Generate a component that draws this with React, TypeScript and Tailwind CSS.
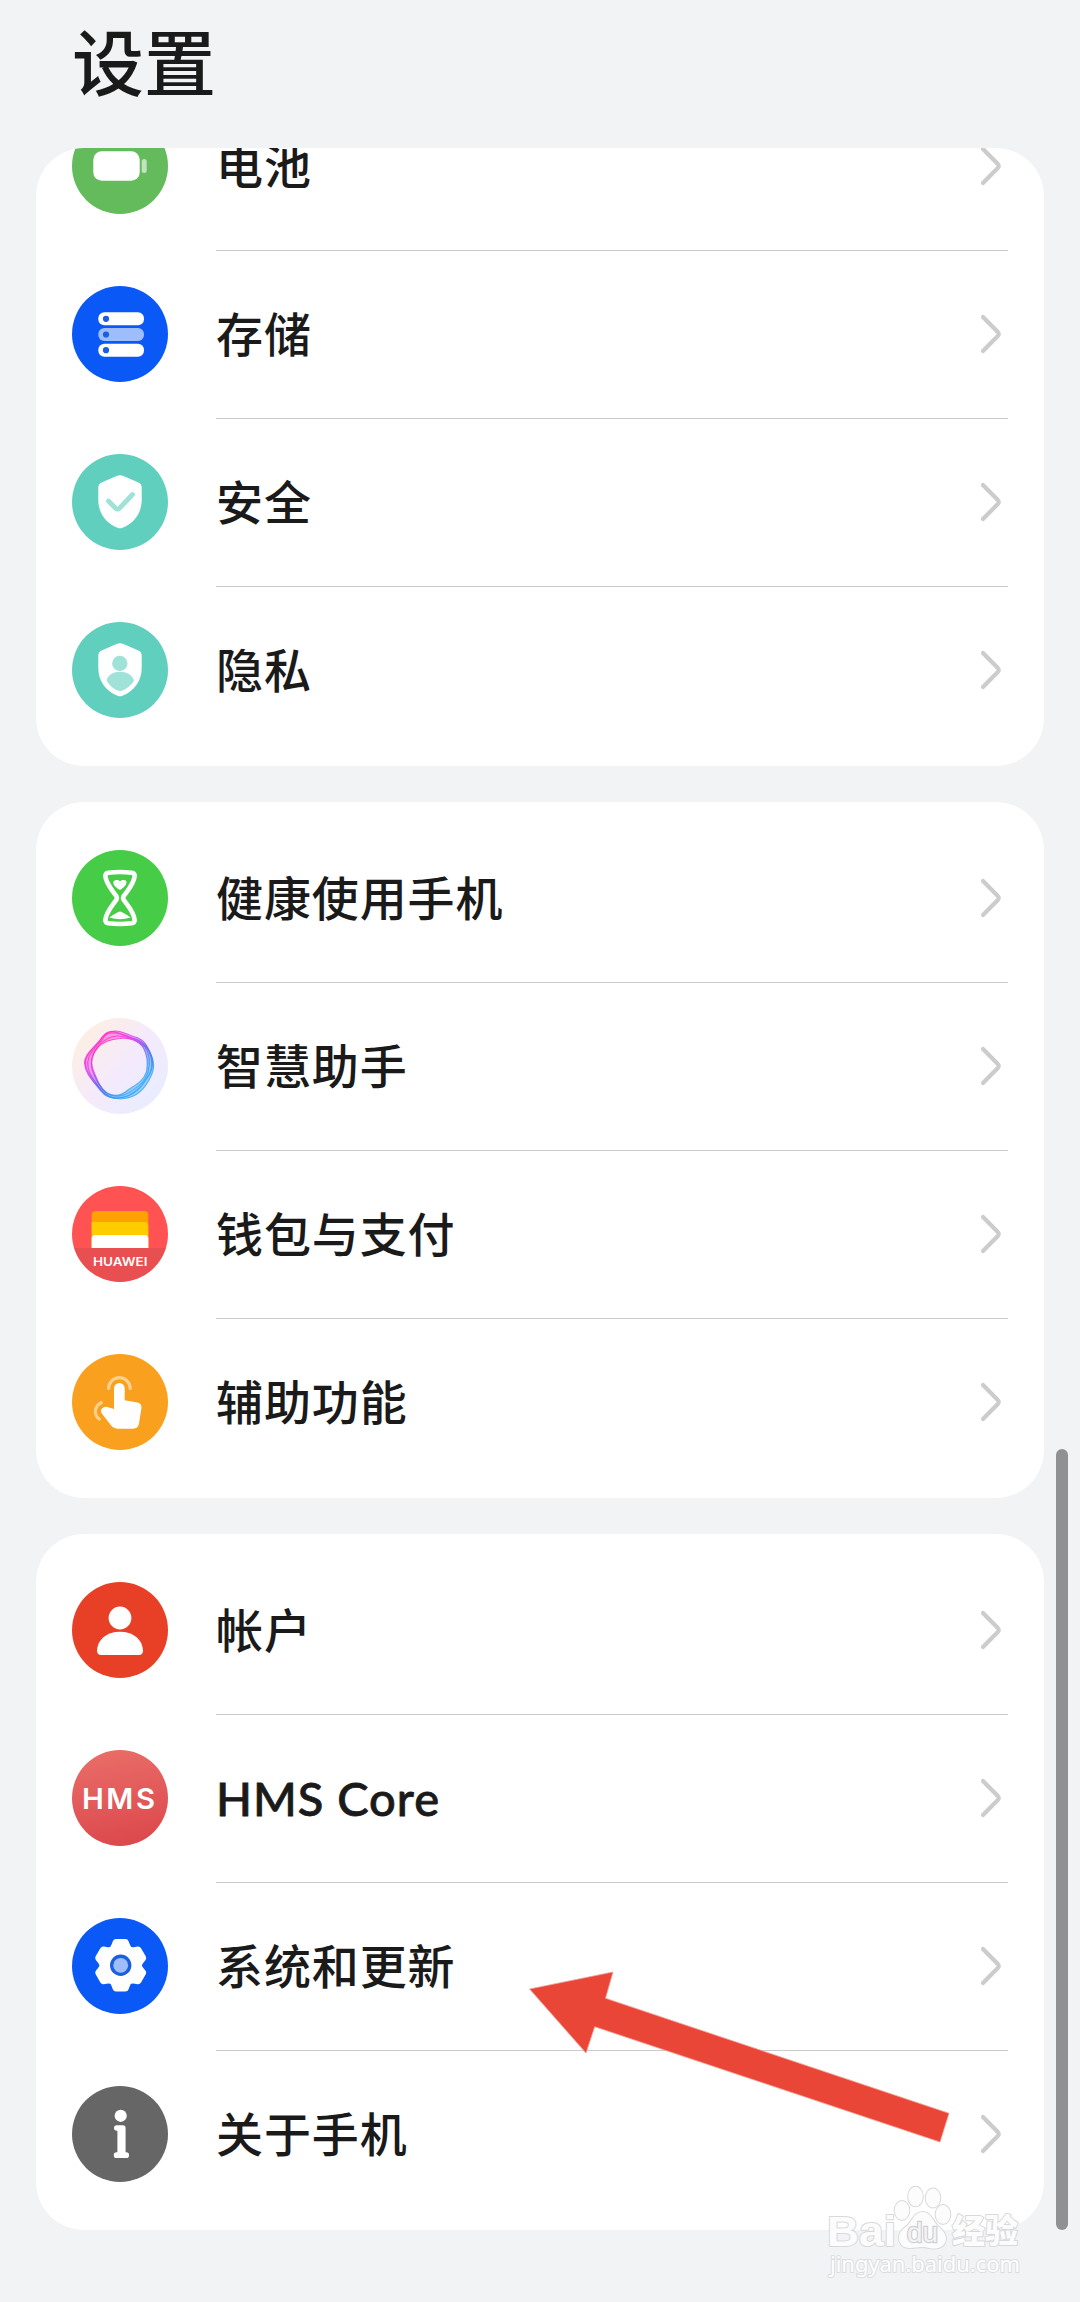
import type { ReactNode } from 'react';

const SHIELD =
  'M44.5 22 Q48 20.3 51.5 22 L67 28.8 Q69.7 30.2 69.7 33 V46 C69.7 58 63 69 50.5 73.8 Q48 74.8 45.5 73.8 C33 69 26.3 58 26.3 46 V33 Q26.3 30.2 29 28.8Z';

function Badge({ color, children }: { color: string; children: ReactNode }) {
  return (
    <svg viewBox="0 0 96 96" className="size-24 shrink-0">
      <circle cx="48" cy="48" r="48" fill={color} />
      {children}
    </svg>
  );
}

const BatteryIcon = () => (
  <Badge color="#64bb5c">
    <rect x="21.3" y="33.3" width="46.4" height="29.4" rx="8.5" fill="#fff" />
    <rect x="69.7" y="41" width="5" height="14" rx="2.5" fill="#fff" opacity="0.6" />
  </Badge>
);

const StorageIcon = () => (
  <Badge color="#0a59f7">
    {[26.3, 42, 57.7].map((y, i) => (
      <g key={y}>
        <rect x="26.3" y={y} width="45.7" height="13" rx="6" fill={i === 1 ? '#9dbdfc' : '#fff'} />
        <circle cx="34" cy={y + 6.5} r="3.1" fill="#1a5fe0" />
      </g>
    ))}
  </Badge>
);

const SecurityIcon = () => (
  <Badge color="#61cfbe">
    <path d={SHIELD} fill="#fff" />
    <path
      d="M36.5 47 L43.5 54.2 Q45.5 56 47.5 54.2 L60.5 40.5"
      fill="none"
      stroke="#a0e2d8"
      strokeWidth="4.8"
      strokeLinecap="round"
    />
  </Badge>
);

const PrivacyIcon = () => (
  <Badge color="#61cfbe">
    <path d={SHIELD} fill="#fff" />
    <circle cx="47.8" cy="41.4" r="7.7" fill="#a0e2d8" />
    <path
      d="M34.6 58.5 C36 52.5 42 49.8 48 49.8 S60 52.5 62 58.5 C59 64 54 67.5 48 69.3 C42 67.5 37.5 64 34.6 58.5Z"
      fill="#a0e2d8"
    />
  </Badge>
);

const HourglassIcon = () => (
  <Badge color="#47cc47">
    <path
      d="M33.3 25.8 Q33.5 23 36.3 22.7 Q48 21.3 59.7 22.7 Q62.5 23 62.7 25.8 C62 34 56 40 51.5 46.3 Q50.5 48 51.5 49.7 C56 56 62 62 62.7 70.2 Q62.5 73 59.7 73.3 Q48 74.7 36.3 73.3 Q33.5 73 33.3 70.2 C34 62 40 56 44.5 49.7 Q45.5 48 44.5 46.3 C40 40 34 34 33.3 25.8Z"
      fill="none"
      stroke="#fff"
      strokeWidth="4.6"
    />
    <path
      d="M47.8 40 C44 37.5 41.5 35.5 41.3 32.8 C41 29.8 46 29.3 48 31.3 C50 29.3 54.5 29.3 54.5 32 C54.3 35.5 51.5 37.8 47.8 40Z"
      fill="#fff"
    />
    <path
      d="M37.3 67.5 Q41 64.8 44.5 63 Q48 59.8 51.5 63 Q55 64.8 58.7 67.5 Q53 69.3 48 69.3 T37.3 67.5Z"
      fill="#fff"
    />
  </Badge>
);

const RING = [
  'M43 13 C50 12.5 56 17.5 65 19.5 C74 23 76 30 79.5 38 C83 47 82 53 77 62 C70 75 62 79.5 52 80.5 C42 81.5 34 80 29 73 C20 62 13 55 12.5 45 C12.5 36 22 30 28 22 C32 16 37 13.3 43 13Z',
  'M41 13.5 C50 15 57 20 64 21 C73 24 77 31 79 39 C81 49 79 55 73 63 C67 73 56 80 45 80 C34 80 29 73 24 65 C17 56 13 52 13.5 43 C15 33 26 27 30 19.5 C33 15.5 36 13 41 13.5Z',
  'M38 15 C47 13.5 56 19 65 22 C74 27 80 35 80.5 44 C81 54 75 60 69 68 C60 78 52 80 43 80 C33 79 26 69 21 61 C16 53 14.5 45 17 39 C20 31 28 26 32 19 C34 16.5 36 15.5 38 15Z',
  'M48 20.5 C57 19 67 23 71.5 30 C76 38 76 46 74.5 54 C71 64 63 67 56 72 C49 78 42 79 35 75 C27 69 25 61 21.5 53 C18 45 20 36 25 30 C31 24 39 21 48 20.5Z',
  'M46 18 C55 18 66 22 73 29 C78 36 78 46 76 54 C73 64 66 69 58 74 C48 80 40 79 33 74 C25 66 22 58 20 51 C18 43 20 36 26 29 C31 22 37 18 46 18Z',
];

const AssistantIcon = () => (
  <Badge color="url(#assistant-bg)">
    <defs>
      <linearGradient id="assistant-bg" x1="0.1" y1="0.15" x2="0.9" y2="0.85">
        <stop offset="0" stopColor="#fdefe3" />
        <stop offset="0.5" stopColor="#f5eafb" />
        <stop offset="1" stopColor="#e8edff" />
      </linearGradient>
      <linearGradient id="assistant-ring" x1="0.2" y1="0.15" x2="0.75" y2="0.85">
        <stop offset="0" stopColor="#ff2ec4" />
        <stop offset="0.28" stopColor="#e040ee" />
        <stop offset="0.55" stopColor="#7060ee" />
        <stop offset="0.8" stopColor="#3590f3" />
        <stop offset="1" stopColor="#38a8f8" />
      </linearGradient>
    </defs>
    <g fill="none" stroke="url(#assistant-ring)">
      <path d={`${RING[0]} ${RING[3]}`} fill="url(#assistant-ring)" fillRule="evenodd" stroke="none" opacity="0.45" />
      {RING.map((d) => (
        <path key={d} d={d} strokeWidth="1.2" opacity="0.8" />
      ))}
    </g>
  </Badge>
);

const WalletIcon = () => (
  <Badge color="#ff5252">
    <path d="M2.2 62 H93.8 A48 48 0 0 1 2.2 62Z" fill="#e84f51" />
    <path d="M19.7 62 V29 Q19.7 25 23.7 25 H72.3 Q76.3 25 76.3 29 V62Z" fill="#ffa200" />
    <path d="M19.7 62 V36 H72.3 Q76.3 36 76.3 40 V62Z" fill="#fc0" />
    <path d="M19.7 62 V53 Q19.7 49 23.7 49 H72.3 Q76.3 49 76.3 53 V62Z" fill="#fff" />
    <text
      x="21"
      y="79.5"
      fontSize="12"
      fontWeight="600"
      textLength="54.5"
      lengthAdjust="spacingAndGlyphs"
      fill="#fff"
      className="font-['Inter',sans-serif]"
    >
      HUAWEI
    </text>
  </Badge>
);

const TouchIcon = () => (
  <Badge color="#f9a01e">
    <path
      d="M42 34.3 A5.35 5.35 0 0 1 52.7 34.3 V46.3 L65.5 48.6 Q70 49.7 69.4 54.5 L67 69.5 Q66 74.7 61 74.7 H45.5 Q42 74.7 39.5 72 L29.8 59.5 Q28 56.5 30 54.5 Q32.5 52 36 53.2 L42 55Z"
      fill="#fff"
    />
    <g fill="none" stroke="#fff" strokeOpacity="0.5" strokeWidth="3.2" strokeLinecap="round">
      <path d="M36.6 34.5 A10.8 10.8 0 0 1 58.2 34.5" />
      <path d="M29.3 48.7 Q23.5 51.5 23.3 57.5 Q23.5 62.5 27.3 65" />
    </g>
  </Badge>
);

const AccountIcon = () => (
  <Badge color="#e84026">
    <circle cx="48" cy="36" r="11.4" fill="#fff" />
    <path
      d="M25 68.5 C25.5 58 34 49.8 48 49.8 S70.5 58 71 68.5 Q71 73 66.5 73 H29.5 Q25 73 25 68.5Z"
      fill="#fff"
    />
  </Badge>
);

const HmsIcon = () => (
  <Badge color="url(#hms-bg)">
    <defs>
      <linearGradient id="hms-bg" x1="0.4" y1="0" x2="0.6" y2="1">
        <stop offset="0" stopColor="#e96c67" />
        <stop offset="1" stopColor="#dc484c" />
      </linearGradient>
    </defs>
    <text
      x="10"
      y="58.8"
      fontSize="29"
      fontWeight="600"
      letterSpacing="2.5"
      textLength="75.5"
      lengthAdjust="spacingAndGlyphs"
      fill="#fff"
      className="font-['Inter',sans-serif]"
    >
      HMS
    </text>
  </Badge>
);

const SystemIcon = () => (
  <Badge color="#0a59f7">
    <g fill="#fff" transform="translate(48.7 47.3)">
      <circle r="20.5" />
      {[0, 60, 120, 180, 240, 300].map((deg) => (
        <path
          key={deg}
          transform={`rotate(${deg})`}
          d="M-12.5 -16.5 Q-10 -18 -8.8 -21.5 L-7.9 -24 Q-7 -26.2 -4.7 -26.2 H4.7 Q7 -26.2 7.9 -24 L8.8 -21.5 Q10 -18 12.5 -16.5Z"
        />
      ))}
    </g>
    <circle cx="48.7" cy="47.3" r="10.7" fill="#1a5fe0" />
    <circle cx="48.7" cy="47.3" r="7.4" fill="#9dbdfc" />
  </Badge>
);

const InfoIcon = () => (
  <Badge color="#666">
    <circle cx="48.7" cy="29.8" r="6.1" fill="#fff" />
    <path
      d="M44.8 39.2 H51 Q53.6 39.2 53.6 41.8 V66.3 H54.2 A2.85 2.85 0 0 1 54.2 72 H44.6 A2.85 2.85 0 0 1 44.6 66.3 H45.4 V44.8 H44.8 A2.8 2.8 0 0 1 44.8 39.2Z"
      fill="#fff"
    />
  </Badge>
);

const GROUPS = [
  {
    id: 'device',
    items: [
      { label: '电池', Icon: BatteryIcon },
      { label: '存储', Icon: StorageIcon },
      { label: '安全', Icon: SecurityIcon },
      { label: '隐私', Icon: PrivacyIcon },
    ],
  },
  {
    id: 'features',
    items: [
      { label: '健康使用手机', Icon: HourglassIcon },
      { label: '智慧助手', Icon: AssistantIcon },
      { label: '钱包与支付', Icon: WalletIcon },
      { label: '辅助功能', Icon: TouchIcon },
    ],
  },
  {
    id: 'system',
    items: [
      { label: '帐户', Icon: AccountIcon },
      { label: 'HMS Core', Icon: HmsIcon, latin: true },
      { label: '系统和更新', Icon: SystemIcon },
      { label: '关于手机', Icon: InfoIcon },
    ],
  },
] as { id: string; items: { label: string; Icon: () => ReactNode; latin?: boolean }[] }[];

function Chevron() {
  return (
    <svg viewBox="0 0 24 40" className="mr-1 h-10 w-6 shrink-0">
      <path
        d="M3 3 L17.8 18 Q19.5 20 17.8 22 L3 37"
        fill="none"
        stroke="#ccc"
        strokeWidth="4.2"
        strokeLinecap="round"
      />
    </svg>
  );
}

function Watermark() {
  return (
    <svg
      viewBox="0 0 210 105"
      className="absolute top-[2180px] left-[820px] h-[105px] w-[210px] font-['Liberation_Sans','Noto_Sans_CJK_SC',sans-serif]"
    >
      <g fill="#fcfcfd" stroke="#d8d9db" strokeWidth="2" paintOrder="stroke" strokeLinejoin="round">
        <text x="7" y="66" fontSize="43" fontWeight="700" textLength="69" lengthAdjust="spacingAndGlyphs">
          Bai
        </text>
        <text x="132" y="63" fontSize="33" fontWeight="900" textLength="66" lengthAdjust="spacingAndGlyphs">
          经验
        </text>
        <ellipse cx="82" cy="30.5" rx="7.3" ry="9.5" />
        <ellipse cx="95.5" cy="16.5" rx="7.3" ry="9.8" />
        <ellipse cx="113" cy="18" rx="7.3" ry="9.5" />
        <ellipse cx="123" cy="34.5" rx="7.3" ry="9.5" />
        <path d="M102.5 32 C110 32 112 39 117 45 C122 50 126 53 126 59 C125 66 120 68.5 114 68.5 C109 68.5 107 67 102 67 C97 67 95 68 90 68 C83 68 79 64 79 58 C79 52 83 49 88 45 C93 39 95 32 102.5 32Z" />
      </g>
      <text
        x="87"
        y="62"
        fontSize="27"
        textLength="31"
        lengthAdjust="spacingAndGlyphs"
        fill="#f2f3f4"
        stroke="#cfd0d2"
        strokeWidth="2.4"
        paintOrder="stroke"
      >
        du
      </text>
      <text
        x="10"
        y="91.5"
        fontSize="22"
        textLength="190"
        lengthAdjust="spacingAndGlyphs"
        fill="#fff"
        stroke="#dcdddf"
        strokeWidth="2"
        paintOrder="stroke"
        className="font-['Noto_Sans',sans-serif]"
      >
        jingyan.baidu.com
      </text>
    </svg>
  );
}

export default function App() {
  return (
    <div className="relative h-[2302px] w-[1080px] overflow-hidden bg-[#f1f3f5] font-['Lato','Noto_Sans_CJK_SC',sans-serif] text-[#1a1a1a]">
      <header className="flex h-[148px] items-start px-[72px] pt-2.5">
        <h1 className="text-[72px] leading-[104px] font-medium">设置</h1>
      </header>

      <main className="flex flex-col gap-9 px-9">
        {GROUPS.map((group, g) => (
          <section key={group.id} className="overflow-hidden rounded-[48px] bg-white">
            <ul className={g === 0 ? '-mt-[66px] pb-3' : 'py-3'}>
              {group.items.map(({ label, Icon, latin }, i) => (
                <li key={label} className="flex h-[168px] items-stretch gap-12 px-9">
                  <div className="flex items-center">
                    <Icon />
                  </div>
                  <div
                    className={`flex flex-1 items-center justify-between ${
                      i > 0 ? 'shadow-[inset_0_1px_0_#cbcbcb]' : ''
                    }`}
                  >
                    <span
                      className={`text-[47px] leading-[72px] font-medium ${
                        latin ? 'tracking-[1px] [-webkit-text-stroke:0.8px_#1a1a1a]' : 'tracking-[0.9px]'
                      }`}
                    >
                      {label}
                    </span>
                    <Chevron />
                  </div>
                </li>
              ))}
            </ul>
          </section>
        ))}
      </main>

      {/* scrollbar thumb */}
      <div className="absolute top-[1449px] right-3 h-[781px] w-3 rounded-full bg-[#909193]" />

      {/* pointer to the system & updates row */}
      <svg viewBox="0 0 430 180" className="absolute top-[1968px] left-[525px] h-[180px] w-[430px]">
        <path
          d="M4.6 21 L88 4 L80.5 30.3 L424 145.3 L415 174 L69.7 58.7 L61 85Z"
          fill="#ea4637"
          stroke="#f3a097"
          strokeWidth="0.8"
        />
      </svg>

      <Watermark />
    </div>
  );
}
